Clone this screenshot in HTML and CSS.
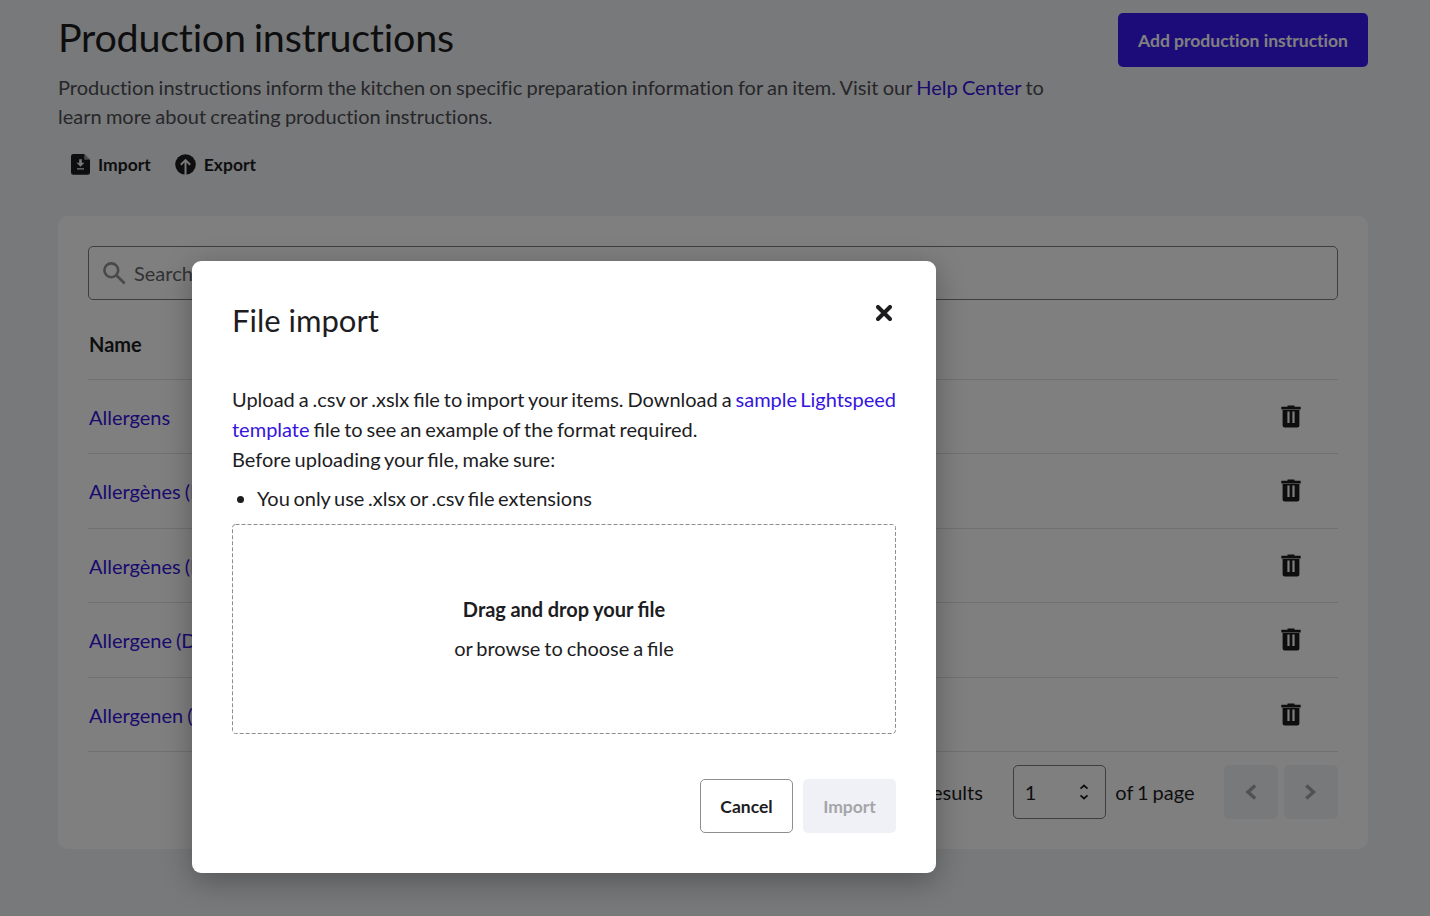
FILE: index.html
```html
<!DOCTYPE html>
<html lang="en">
<head>
	<title>Production instructions</title>
	<meta charset="utf-8">
	<meta name="viewport" content="width=device-width, initial-scale=1">
	<link rel="stylesheet" href="styles.css">
</head>
<body>
	<svg width="0" height="0" style="display: none">
		<symbol id="trash" viewBox="0 0 20 23">
			<path fill-rule="evenodd" d="M6.5 0.5h7v1.3h6.2v2.6H0.3V1.8h6.2zM1.6 4h16.8v16.5a2 2 0 0 1-2 2H3.6a2 2 0 0 1-2-2zM6.4 6.5v11.6h2.2V6.5zM11.4 6.5v11.6h2.2V6.5z"/>
		</symbol>
	</svg>

	<main class="page">
		<header class="header">
			<div class="intro">
				<h1>Production instructions</h1>
				<p>Production instructions inform the kitchen on specific preparation information for an item. Visit our <a href="#">Help Center</a> to learn more about creating production instructions.</p>
			</div>
			<button class="primary">Add production instruction</button>
		</header>

		<div class="actions">
			<button>
				<svg width="19" height="21" viewBox="0 0 19 21">
					<path d="M2.3 0H13.500v5.500H19v13a2.300 2.300 0 0 1-2.300 2.300H2.300A2.300 2.300 0 0 1 0 18.500V2.300A2.300 2.300 0 0 1 2.300 0z"/>
					<path d="M13.500 0l5.500 5.500h-5.500z" opacity=".4"/>
					<path class="cut" d="M8.200 5.200h2.600v3.500h2.600l-3.900 4-3.900-4h2.600zM6 14.200h7v1.400H6z"/>
				</svg>
				Import
			</button>
			<button>
				<svg width="21" height="21" viewBox="0 0 21 21">
					<circle cx="10.500" cy="10.500" r="10.300"/>
					<path class="cut-line" d="M10.500 21V6.500M5.800 10.800l4.700-4.700 4.700 4.700"/>
				</svg>
				Export
			</button>
		</div>

		<section class="card">
			<div class="search">
				<svg width="23" height="23" viewBox="0 0 23 23"><circle cx="8.300" cy="8.300" r="6.900"/><path d="M13.300 13.300l8.400 8.200"/></svg>
				Search
			</div>
			<div class="row head">Name</div>
			<div class="row"><a href="#">Allergens</a><svg class="trash"><use href="#trash"/></svg></div>
			<div class="row"><a href="#">Allergènes (FR)</a><svg class="trash"><use href="#trash"/></svg></div>
			<div class="row"><a href="#">Allergènes (BE)</a><svg class="trash"><use href="#trash"/></svg></div>
			<div class="row"><a href="#">Allergene (DE)</a><svg class="trash"><use href="#trash"/></svg></div>
			<div class="row"><a href="#">Allergenen (NL)</a><svg class="trash"><use href="#trash"/></svg></div>
			<footer class="pager">
				<span class="results">5 results</span>
				<div class="select">
					1
					<svg width="10" height="16" viewBox="0 0 10 16"><path d="M1.500 4.700L5 1.500l3.500 3.200M1.500 11.300L5 14.500l3.500-3.200"/></svg>
				</div>
				<span class="of">of 1 page</span>
				<div class="step"><svg width="12" height="16" viewBox="0 0 12 16"><path d="M10.200 1.500L3 8l7.200 6.500"/></svg></div>
				<div class="step"><svg width="12" height="16" viewBox="0 0 12 16"><path d="M1.300 1.500L8.500 8l-7.200 6.500"/></svg></div>
			</footer>
		</section>
	</main>

	<div class="overlay">
		<div class="modal">
			<div class="modal-head">
				<h2>File import</h2>
				<svg width="16" height="16" viewBox="0 0 16 16"><path d="M2 2l12 12M14 2L2 14"/></svg>
			</div>
			<p>Upload a .csv or .xslx file to import your items. Download a <a href="#">sample Lightspeed<br>template</a> file to see an example of the format required.<br>Before uploading your file, make sure:</p>
			<ul>
				<li>You only use .xlsx or .csv file extensions</li>
			</ul>
			<div class="dropzone">
				<svg class="dashes"><rect x="0.500" y="0.500" width="663" height="209" rx="3"/></svg>
				<strong>Drag and drop your file</strong>
				<span>or browse to choose a file</span>
			</div>
			<div class="buttons">
				<button class="cancel">Cancel</button>
				<button class="import" disabled>Import</button>
			</div>
		</div>
	</div>
</body>
</html>
```
FILE: styles.css
```css
* {
	box-sizing: border-box;
}
body {
	margin: 0;
	height: 916px;
	overflow: hidden;
	background-color: #f0f2f5;
	color: #1d1d1f;
	font-family: Lato, "Liberation Sans", sans-serif;
	font-size: 20px;
	line-height: 30px;
	word-spacing: -1.2px;
}
h1, h2, p, ul {
	margin: 0;
	font-weight: normal;
}
a {
	color: #3514e0;
	text-decoration: none;
}
button {
	font-family: inherit;
	font-size: 17.500px;
	font-weight: bold;
	color: #1d1d1f;
	border: none;
	border-radius: 5px;
	padding: 0;
}
.page {
	width: 1310px;
	margin-left: 58px;
	padding-top: 12px;
}
.header {
	display: flex;
	justify-content: space-between;
	align-items: flex-start;
}
.intro {
	width: 1000px;
	font-variant-ligatures: none;
}
h1 {
	font-size: 39.500px;
	line-height: 50px;
	letter-spacing: -0.260px;
	word-spacing: -2px;
}
.intro p {
	margin-top: 11px;
	line-height: 29px;
	word-spacing: -0.900px;
	color: #4e4e54;
}
.primary {
	width: 250px;
	height: 54px;
	margin-top: 1px;
	background-color: #3919f5;
	color: #fff;
	font-variant-ligatures: none;
	word-spacing: 0;
}
.actions {
	display: flex;
	gap: 24px;
	margin: 21px 0 0 13px;
}
.actions button {
	display: flex;
	align-items: center;
	gap: 8px;
	height: 24px;
	background: none;
}
.actions svg {
	fill: #1d1d1f;
}
.actions .cut {
	fill: #f0f2f5;
}
.actions .cut-line {
	fill: none;
	stroke: #f0f2f5;
	stroke-width: 2;
}
.card {
	height: 633px;
	margin-top: 40px;
	padding: 30px;
	background-color: #fff;
	border-radius: 10px;
}
.search {
	display: flex;
	align-items: center;
	gap: 8px;
	height: 54px;
	padding-left: 14px;
	border: 1px solid #7c7c80;
	border-radius: 5px;
	color: #65656a;
}
.search svg {
	fill: none;
	stroke: #929296;
	stroke-width: 2.600;
}
.row {
	display: flex;
	align-items: center;
	justify-content: space-between;
	height: 74.500px;
	padding: 0 37px 0 1px;
	border-bottom: 1px solid #e0e0e4;
}
.head {
	height: 79.900px;
	padding-top: 9px;
	font-weight: bold;
}
.trash {
	width: 20px;
	height: 23px;
	margin-top: -1px;
	fill: #1d1d1f;
}
.pager {
	display: flex;
	align-items: center;
	justify-content: flex-end;
	margin-top: 13px;
}
.results {
	margin-right: 30px;
}
.select {
	display: flex;
	align-items: center;
	justify-content: space-between;
	width: 93px;
	height: 54px;
	padding: 0 16px 0 11px;
	border: 1px solid #7c7c80;
	border-radius: 5px;
}
.select svg {
	fill: none;
	stroke: #1d1d1f;
	stroke-width: 1.800;
}
.of {
	margin: 0 29.500px 0 9.500px;
}
.step {
	display: flex;
	align-items: center;
	justify-content: center;
	width: 54px;
	height: 54px;
	background-color: #f0f2f5;
	border-radius: 5px;
}
.step + .step {
	margin-left: 6px;
}
.step svg {
	fill: none;
	stroke: #a5a5aa;
	stroke-width: 3.500;
	overflow: visible;
}
.overlay {
	position: absolute;
	inset: 0;
	padding: 261px 0 0 192px;
	background-color: rgba(0,0,0,0.5);
}
.modal {
	width: 744px;
	height: 612px;
	padding: 39px 40px;
	background-color: #fff;
	border-radius: 9px;
	box-shadow: 0 8px 30px 0 rgba(0,0,0,0.3);
}
.modal p {
	white-space: nowrap;
}
.modal p a {
	word-spacing: -2px;
}
.modal-head {
	display: flex;
	justify-content: space-between;
	padding-right: 4px;
	margin-bottom: 44px;
}
h2 {
	font-size: 31px;
	line-height: 40px;
	word-spacing: 0;
}
.modal-head svg {
	margin-top: 5px;
	stroke: #1d1d1f;
	stroke-width: 4;
	stroke-linecap: round;
}
ul {
	margin-top: 9px;
	padding-left: 25px;
	word-spacing: -1.500px;
}
.dropzone {
	position: relative;
	display: flex;
	flex-direction: column;
	align-items: center;
	justify-content: center;
	gap: 9px;
	height: 210px;
	margin-top: 11px;
	padding-bottom: 2px;
}
.dropzone strong {
	word-spacing: -0.400px;
}
.dashes {
	position: absolute;
	inset: 0;
	width: 664px;
	height: 210px;
	fill: none;
	stroke: #8e8e92;
	stroke-dasharray: 4 2;
}
.buttons {
	display: flex;
	justify-content: flex-end;
	gap: 10px;
	margin-top: 45px;
}
.buttons button {
	width: 93px;
	height: 54px;
}
.cancel {
	background-color: #fff;
	border: 1px solid #8e8e92;
}
.import {
	background-color: #f0f1f6;
	color: #a5a5a9;
}
```
